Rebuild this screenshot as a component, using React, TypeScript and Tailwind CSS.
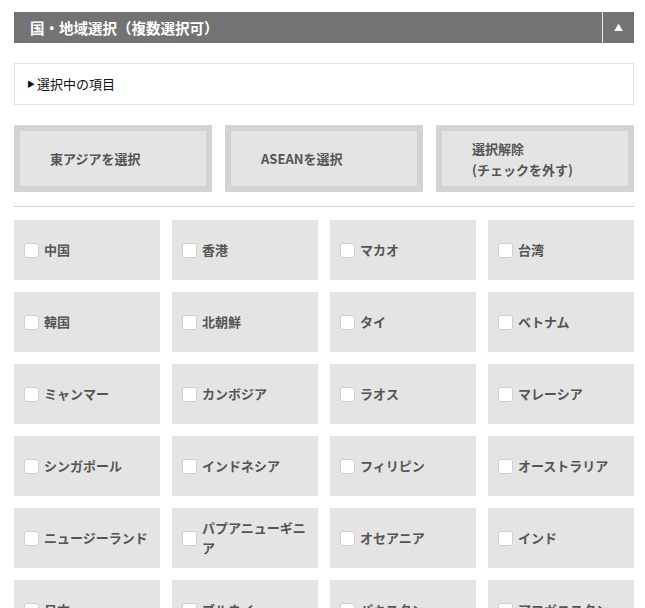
const countries = [
  '中国', '香港', 'マカオ', '台湾',
  '韓国', '北朝鮮', 'タイ', 'ベトナム',
  'ミャンマー', 'カンボジア', 'ラオス', 'マレーシア',
  'シンガポール', 'インドネシア', 'フィリピン', 'オーストラリア',
  'ニュージーランド', 'パプアニューギニア', 'オセアニア', 'インド',
  '日本', 'ブルネイ', 'パキスタン', 'アフガニスタン',
];

export default function App() {
  return (
    <div className="bg-white min-h-screen pt-[12px] font-['Noto_Sans_CJK_JP','Noto_Sans',sans-serif]">
      <div className="ml-[14px] w-[620px]">
        {/* Header */}
        <div className="flex h-[31px]">
          <div className="flex-1 bg-[#737373] flex items-center pl-[16px] text-white font-bold text-[14.5px]">
            国・地域選択（複数選択可）
          </div>
          <div className="w-[1px] bg-[#e6e6e6]" />
          <div className="w-[31px] bg-[#737373] flex items-center justify-center text-white text-[9px]">
            ▲
          </div>
        </div>

        {/* Selected items */}
        <div className="mt-[20px] h-[42px] border border-[#e3e3e3] flex items-center pl-[12px] text-[13px] text-[#111]">
          <span className="text-[8px] mr-[2px]">▶</span>
          選択中の項目
        </div>

        {/* Buttons */}
        <div className="mt-[20px] grid grid-cols-3 gap-[13px]">
          {['東アジアを選択', 'ASEANを選択', '選択解除\n(チェックを外す)'].map((label) => (
            <button
              key={label}
              className="h-[67px] border-[6px] border-[#d3d3d3] bg-[#e4e4e4] text-left pl-[30px] text-[13px] font-semibold text-[#555] leading-[21px] whitespace-pre-line"
            >
              {label}
            </button>
          ))}
        </div>

        <div className="mt-[14px] h-[1px] bg-[#d0d0d0]" />

        {/* Country grid */}
        <div className="mt-[13px] grid grid-cols-4 gap-[12px]">
          {countries.map((name) => (
            <label
              key={name}
              className="h-[60px] bg-[#e4e4e4] flex items-center pl-[10px] pr-[10px] gap-[5px] text-[13px] font-semibold text-[#555] leading-[20px]"
            >
              <span className="w-[15px] h-[15px] shrink-0 bg-white border border-[#cfcfcf] rounded-[3px]" />
              <span>{name}</span>
            </label>
          ))}
        </div>
      </div>
    </div>
  );
}
